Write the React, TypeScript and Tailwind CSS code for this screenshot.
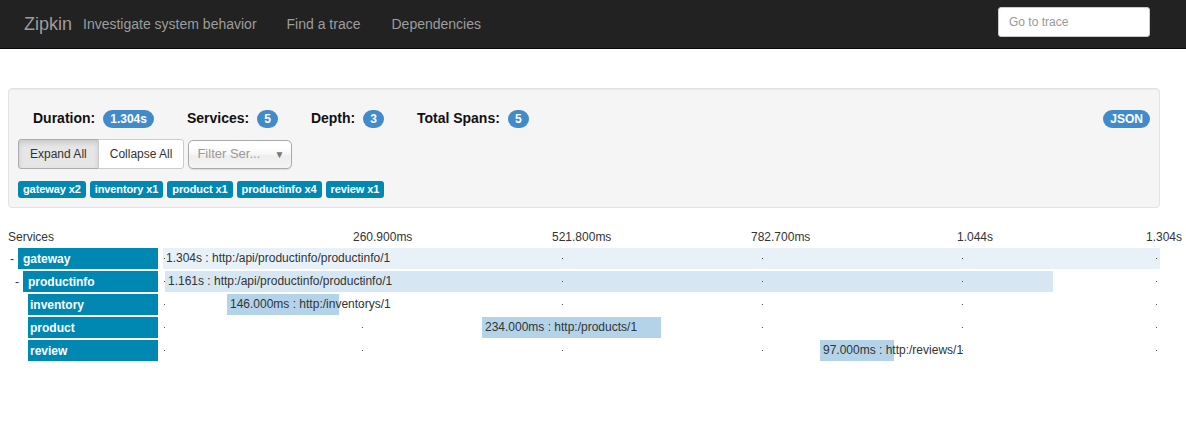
import React from "react";

const TOTAL = 1304;
const TRACK = 997;

const services = [
  { name: "gateway x2" },
  { name: "inventory x1" },
  { name: "product x1" },
  { name: "productinfo x4" },
  { name: "review x1" },
];

const ticks = [
  { label: "260.900ms", pos: "left-[353px]" },
  { label: "521.800ms", pos: "left-[552px]" },
  { label: "782.700ms", pos: "left-[751px]" },
  { label: "1.044s", pos: "left-[957px]" },
  { label: "1.304s", pos: "left-[1146px]" },
];

const dots = [1, 199, 399, 599, 799, 993];

const spans = [
  {
    name: "gateway",
    indent: "pl-[10px]",
    expander: true,
    start: 0,
    dur: 1304,
    label: "1.304s : http:/api/productinfo/productinfo/1",
    color: "bg-[#e9f1f8]",
  },
  {
    name: "productinfo",
    indent: "pl-[15px]",
    expander: true,
    start: 2.6,
    dur: 1161,
    label: "1.161s : http:/api/productinfo/productinfo/1",
    color: "bg-[#d6e7f3]",
  },
  {
    name: "inventory",
    indent: "pl-[28px]",
    expander: false,
    start: 83.7,
    dur: 146,
    label: "146.000ms : http:/inventorys/1",
    color: "bg-[#b4d3e9]",
  },
  {
    name: "product",
    indent: "pl-[28px]",
    expander: false,
    start: 417.2,
    dur: 234,
    label: "234.000ms : http:/products/1",
    color: "bg-[#b4d3e9]",
  },
  {
    name: "review",
    indent: "pl-[28px]",
    expander: false,
    start: 859.3,
    dur: 97,
    label: "97.000ms : http:/reviews/1",
    color: "bg-[#b4d3e9]",
  },
];

const Stat = ({ label, value }: { label: string; value: string }) => (
  <div className="flex items-center gap-2">
    <span className="text-[14px] font-bold text-[#111]">{label}</span>
    <span className="rounded-[10px] bg-[#428bca] px-[7px] py-[3px] text-[12px] font-bold leading-none text-white">
      {value}
    </span>
  </div>
);

export default function App() {
  return (
    <div className="min-h-screen bg-white font-['Liberation_Sans',Arial,sans-serif] text-[#333]">
      {/* top bar */}
      <nav className="flex h-[49px] items-center border-b border-[#080808] bg-[#222]">
        <span className="ml-6 text-[18px] text-[#9d9d9d]">Zipkin</span>
        <span className="ml-[11px] text-[14px] text-[#9d9d9d]">Investigate system behavior</span>
        <a className="ml-[30px] text-[14px] text-[#9d9d9d]">Find a trace</a>
        <a className="ml-[31px] text-[14px] text-[#9d9d9d]">Dependencies</a>
        <input
          placeholder="Go to trace"
          className="mb-[4px] ml-auto mr-[36px] h-[30px] w-[152px] rounded-[3px] border border-[#ccc] bg-white px-[10px] text-[12px] text-[#555] outline-none placeholder:text-[#999]"
        />
      </nav>

      {/* summary well */}
      <div className="mx-2 mt-[39px] w-[1152px] rounded-[4px] border border-[#e3e3e3] bg-[#f5f5f5] px-[9px] pb-[9px] pt-[20px] shadow-[inset_0_1px_1px_rgba(0,0,0,0.05)]">
        <div className="flex h-[19px] items-center">
          <div className="ml-[15px] flex items-center gap-[33px]">
            <Stat label="Duration:" value="1.304s" />
            <Stat label="Services:" value="5" />
            <Stat label="Depth:" value="3" />
            <Stat label="Total Spans:" value="5" />
          </div>
          <span className="ml-auto rounded-[10px] bg-[#428bca] px-[7px] py-[3px] text-[12px] font-bold leading-none text-white">
            JSON
          </span>
        </div>

        <div className="mt-[11px] flex items-center">
          <button
            type="button"
            className="h-[30px] rounded-l-[3px] border border-[#adadad] bg-[#e6e6e6] px-[11px] text-[12px] text-[#333] shadow-[inset_0_3px_5px_rgba(0,0,0,0.125)]"
          >
            Expand All
          </button>
          <button
            type="button"
            className="-ml-px h-[30px] rounded-r-[3px] border border-[#ccc] bg-white px-[11px] text-[12px] text-[#333]"
          >
            Collapse All
          </button>
          <div className="ml-[4px] flex h-[29px] w-[104px] items-center justify-between rounded-[5px] border border-[#aaa] bg-[linear-gradient(#fff_20%,#f6f6f6_50%,#eee_52%,#f4f4f4)] pl-[8px] pr-[7px] shadow-[0_1px_1px_rgba(0,0,0,0.1)]">
            <span className="text-[13px] text-[#999]">Filter Ser...</span>
            <span className="text-[10px] text-[#777]">▼</span>
          </div>
        </div>

        <div className="mt-[12px] flex gap-[4px]">
          {services.map((s) => (
            <span
              key={s.name}
              className="flex h-[17px] items-center rounded-[3px] bg-[#0088b2] px-[5px] text-[11px] font-bold tracking-[-0.1px] text-white"
            >
              {s.name}
            </span>
          ))}
        </div>
      </div>

      {/* timeline header */}
      <div className="relative mt-[19px] h-[20px] text-[12px] leading-[20px]">
        <span className="pl-2">Services</span>
        {ticks.map((t) => (
          <span key={t.label} className={`absolute top-0 ${t.pos}`}>
            {t.label}
          </span>
        ))}
      </div>

      {/* span rows */}
      <div className="mt-[1px] flex flex-col gap-[2px]">
        {spans.map((s) => (
          <div key={s.name} className="flex h-[21px]">
            <div className={`flex w-[158px] items-center ${s.indent}`}>
              {s.expander && <span className="w-[8px] text-[12px]">-</span>}
              <div
                className={`flex h-full flex-1 items-center bg-[#0088b2] text-[12px] font-bold text-white ${
                  s.expander ? "pl-[5px]" : "pl-[2px]"
                }`}
              >
                {s.name}
              </div>
            </div>
            <div className="relative ml-[5px] h-full w-[997px]">
              <div
                className={`absolute top-0 h-full ${s.color}`}
                style={{ left: (s.start / TOTAL) * TRACK, width: (s.dur / TOTAL) * TRACK }}
              />
              {dots.map((d) => (
                <span key={d} className="absolute top-[10px] h-px w-px bg-[#555]" style={{ left: d }} />
              ))}
              <span
                className="absolute top-0 whitespace-nowrap pl-[3px] text-[12px] leading-[21px] text-[#333]"
                style={{ left: (s.start / TOTAL) * TRACK }}
              >
                {s.label}
              </span>
            </div>
          </div>
        ))}
      </div>
    </div>
  );
}
